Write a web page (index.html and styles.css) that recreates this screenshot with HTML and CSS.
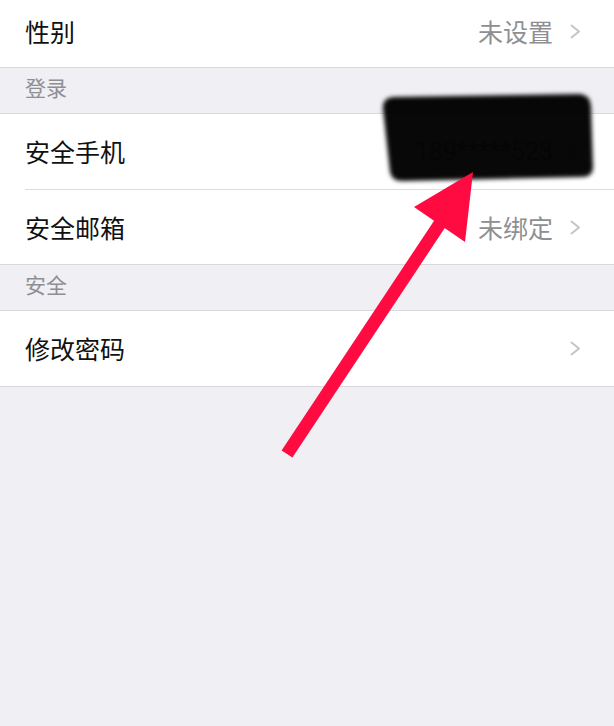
FILE: index.html
```html
<!DOCTYPE html>
<html lang="zh-CN">
<head>
<meta charset="utf-8">
<title>账号与安全</title>
<link rel="stylesheet" href="styles.css">
</head>
<body>
<div class="page">
  <div class="group group-top">
    <div class="row row-short">
      <span class="label">性别</span>
      <span class="value">未设置</span>
      <svg class="chev" viewBox="0 0 11 15" width="11" height="15"><polyline points="1.5,1.5 9,7.5 1.5,13.5" /></svg>
    </div>
  </div>
  <div class="section-title">登录</div>
  <div class="group">
    <div class="row">
      <span class="label">安全手机</span>
      <span class="value value-num">189*****523</span>
      <svg class="chev" viewBox="0 0 11 15" width="11" height="15"><polyline points="1.5,1.5 9,7.5 1.5,13.5" /></svg>
    </div>
    <div class="row">
      <span class="label">安全邮箱</span>
      <span class="value">未绑定</span>
      <svg class="chev" viewBox="0 0 11 15" width="11" height="15"><polyline points="1.5,1.5 9,7.5 1.5,13.5" /></svg>
    </div>
  </div>
  <div class="section-title">安全</div>
  <div class="group">
    <div class="row">
      <span class="label">修改密码</span>
      <svg class="chev" viewBox="0 0 11 15" width="11" height="15"><polyline points="1.5,1.5 9,7.5 1.5,13.5" /></svg>
    </div>
  </div>

  <svg class="annot" viewBox="0 0 614 726" width="614" height="726">
    <defs>
      <filter id="smudge" x="-10%" y="-20%" width="120%" height="140%">
        <feGaussianBlur stdDeviation="2.2" />
      </filter>
    </defs>
    <path class="scribble" filter="url(#smudge)" d="M393,97 L580,94 Q590,95 591,106 L593,167 Q593,177 582,177 L404,181 Q392,182 390,172 L383,109 Q382,98 393,97 Z" />
    <line class="arrow-shaft" x1="287" y1="454" x2="441" y2="222" />
    <polygon class="arrow-head" points="473,172 414,207 465,242" />
  </svg>
</div>
</body>
</html>
```
FILE: styles.css
```css
html, body {
  margin: 0;
  padding: 0;
}

body {
  background: #efeff4;
  font-family: "Noto Sans CJK SC", "Noto Sans", sans-serif;
}

.page {
  position: relative;
  width: 614px;
  min-height: 726px;
}

.group {
  background: #ffffff;
  border-top: 1px solid #d9d9dd;
  border-bottom: 1px solid #d9d9dd;
}

.group-top {
  border-top: none;
}

.row {
  display: flex;
  align-items: center;
  box-sizing: border-box;
  height: 75px;
  margin-left: 25px;
  padding-right: 33px;
}

.row + .row {
  border-top: 1px solid #dcdce0;
}

.row-short {
  height: 67px;
  padding-bottom: 4px;
}

.label {
  flex: 1;
  font-size: 25px;
  line-height: 1;
  color: #111111;
}

.value {
  font-size: 25px;
  line-height: 1;
  color: #8e8e93;
  margin-right: 17px;
}

.value-num {
  font-family: "Roboto", "Liberation Sans", sans-serif;
  font-size: 25px;
  color: #9a9a9f;
}

.chev {
  display: block;
  flex: none;
}

.chev polyline {
  fill: none;
  stroke: #c4c4c9;
  stroke-width: 2;
  stroke-linecap: round;
  stroke-linejoin: round;
}

.section-title {
  display: flex;
  align-items: center;
  box-sizing: border-box;
  height: 45px;
  padding: 0 0 6px 25px;
  font-size: 21px;
  line-height: 1;
  color: #8e8e93;
}

.annot {
  position: absolute;
  left: 0;
  top: 0;
  pointer-events: none;
}

.scribble {
  fill: #050505;
  fill-opacity: 0.97;
}

.arrow-shaft {
  stroke: #ff0b42;
  stroke-width: 13;
  stroke-linecap: butt;
}

.arrow-head {
  fill: #ff0b42;
}
```
